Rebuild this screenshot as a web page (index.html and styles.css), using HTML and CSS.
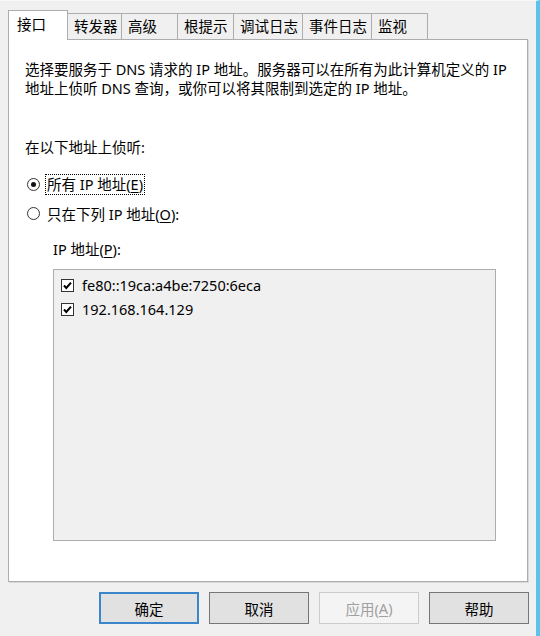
FILE: index.html
```html
<!DOCTYPE html>
<html lang="zh-CN">
<head>
<meta charset="utf-8">
<link rel="stylesheet" href="styles.css">
</head>
<body>
<div class="window">
  <div class="tabs">
    <div class="tab active w59">接口</div>
    <div class="tab w55">转发器</div>
    <div class="tab w57">高级</div>
    <div class="tab w57">根提示</div>
    <div class="tab w70">调试日志</div>
    <div class="tab w70">事件日志</div>
    <div class="tab w57">监视</div>
  </div>
  <div class="panel">
    <p class="desc">选择要服务于 DNS 请求的 IP 地址。服务器可以在所有为此计算机定义的 IP 地址上侦听 DNS 查询，或你可以将其限制到选定的 IP 地址。</p>
    <div class="listen">在以下地址上侦听:</div>
    <div class="radio-row first">
      <span class="radio checked"></span>
      <span class="focus">所有 IP 地址(<u>E</u>)</span>
    </div>
    <div class="radio-row second">
      <span class="radio"></span>
      <span class="plain">只在下列 IP 地址(<u>O</u>):</span>
    </div>
    <div class="ip-label">IP 地址(<u>P</u>):</div>
    <div class="listbox">
      <div class="item">
        <svg class="check" width="13" height="13" viewBox="0 0 13 13"><rect x="0.5" y="0.5" width="12" height="12" fill="#fff" stroke="#333"/><path d="M3 6.5 L5.3 9 L10 3.6" fill="none" stroke="#000" stroke-width="2"/></svg>
        <span>fe80::19ca:a4be:7250:6eca</span>
      </div>
      <div class="item">
        <svg class="check" width="13" height="13" viewBox="0 0 13 13"><rect x="0.5" y="0.5" width="12" height="12" fill="#fff" stroke="#333"/><path d="M3 6.5 L5.3 9 L10 3.6" fill="none" stroke="#000" stroke-width="2"/></svg>
        <span>192.168.164.129</span>
      </div>
    </div>
  </div>
  <div class="buttons">
    <div class="btn default">确定</div>
    <div class="btn">取消</div>
    <div class="btn disabled">应用(<u>A</u>)</div>
    <div class="btn">帮助</div>
  </div>
</div>
</body>
</html>
```
FILE: styles.css
```css
* { box-sizing: border-box; }
html, body { margin: 0; padding: 0; }
body {
  width: 540px;
  height: 636px;
  background: #f0f0f0;
  font-family: "Noto Sans", "Noto Sans CJK SC", sans-serif;
  font-size: 14.5px;
  color: #000;
  overflow: hidden;
}
.window {
  width: 540px;
  height: 636px;
  border-top: 1px solid #f8f8f8;
  border-right: 4px solid #5ec3ec;
  padding: 9px 0 0 8px;
  display: flex;
  flex-direction: column;
}
.tabs {
  display: flex;
  align-items: flex-end;
  height: 29px;
  position: relative;
  z-index: 2;
}
.tab {
  height: 26px;
  border: 1px solid #adadad;
  border-bottom: none;
  background: #f0f0f0;
  margin-right: -1px;
  padding-left: 6px;
  line-height: 25px;
  white-space: nowrap;
}
.tab.active {
  height: 30px;
  margin-bottom: -1px;
  background: #fff;
  padding-left: 8px;
  line-height: 26px;
  position: relative;
  z-index: 3;
}
.w59 { width: 60px; }
.w55 { width: 55px; }
.w57 { width: 57px; }
.w70 { width: 70px; }
.panel {
  width: 520px;
  height: 543px;
  background: #fff;
  border: 1px solid #adadad;
  box-shadow: 1px 1px 0 #d8d8d8;
  padding: 0 0 0 16px;
  display: flex;
  flex-direction: column;
}
.desc {
  margin: 20px 0 0 0;
  line-height: 19px;
  width: 490px;
}
.listen {
  margin-top: 39px;
  line-height: 20px;
}
.radio-row {
  display: flex;
  align-items: center;
  height: 22px;
}
.radio-row.first { margin-top: 16px; }
.radio-row.second { margin-top: 7px; }
.radio {
  width: 13px;
  height: 13px;
  border: 1px solid #333;
  border-radius: 50%;
  background: #fff;
  margin: 0 5px 0 2px;
  display: flex;
  align-items: center;
  justify-content: center;
}
.radio.checked::after {
  content: "";
  width: 5px;
  height: 5px;
  border-radius: 50%;
  background: #111;
}
.focus {
  border: 1px dotted #000;
  padding: 0 1px;
  line-height: 19px;
}
.plain { padding: 0 2px; }
.ip-label {
  margin: 15px 0 0 28px;
  line-height: 20px;
}
.listbox {
  margin: 10px 0 0 28px;
  width: 443px;
  height: 272px;
  background: #f0f0f0;
  border: 1px solid #adadad;
  padding: 3px 0 0 7px;
}
.item {
  display: flex;
  align-items: center;
  height: 24px;
}
.check { margin-right: 8px; flex: none; }
.buttons {
  display: flex;
  gap: 10px;
  padding-left: 91px;
  margin-top: 10px;
}
.btn {
  width: 100px;
  height: 32px;
  border: 1px solid #767676;
  background: #e1e1e1;
  display: flex;
  align-items: center;
  justify-content: center;
}
.btn.default { border-color: #3a86c8; box-shadow: inset 0 0 0 1px #3a86c8; }
.btn.disabled { border-color: #cccccc; background: #f4f4f4; color: #a0a0a0; }
u { text-decoration: underline; text-underline-offset: 2px; }
```
